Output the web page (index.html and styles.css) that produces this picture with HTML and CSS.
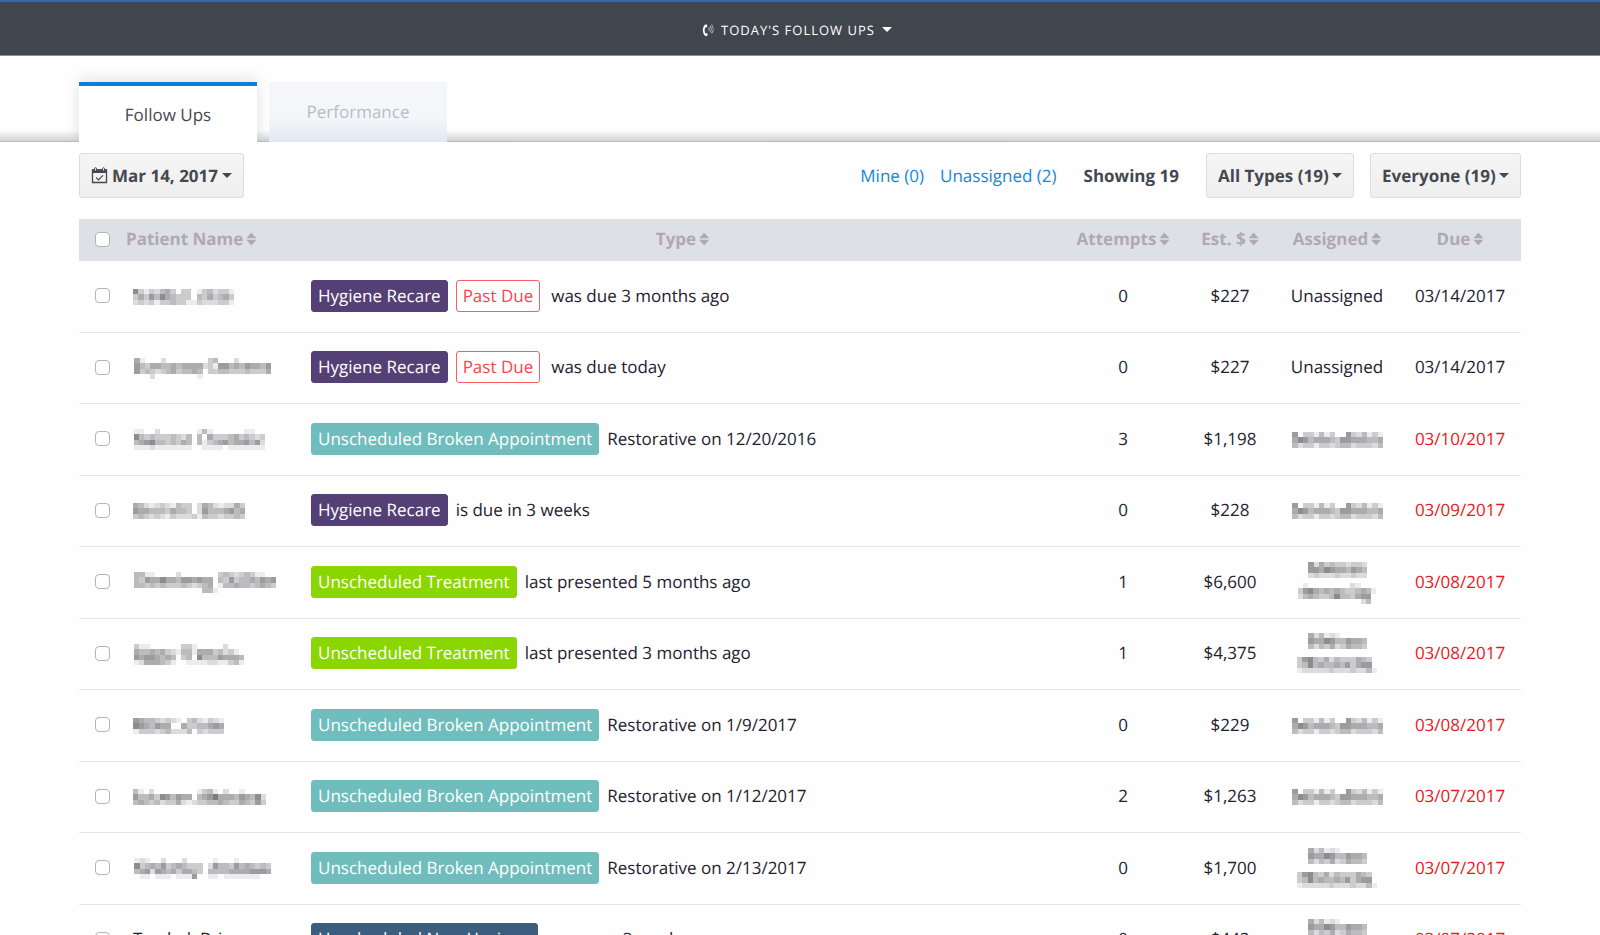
FILE: index.html
```html
<!DOCTYPE html>
<html lang="en">
<head>
    <meta charset="UTF-8">
    <meta name="viewport" content="width=device-width, initial-scale=1.0">
    <title>Today's Follow Ups</title>
    <link rel="stylesheet" href="styles.css">
</head>
<body>
    <header class="topbar">
        <button class="topbar-menu" type="button">
            <svg class="phone-icon" viewBox="0 0 12 14" aria-hidden="true">
                <path d="M4.6 1.2 2.8 1.800C.2 4.600.2 9.600 2.900 12.800l2 .5 1-2.200-1.700-1-.9.3C2.500 8.700 2.500 6.500 3.100 4.600l1 .1 1.300-1.400z" fill="#fff"/>
                <path d="M6.500 4.400c.9.9.9 2.300 0 3.300M8 3c1.700 1.700 1.700 4.400 0 6.100M9.500 1.700c2.200 2.500 2.200 6.200 0 8.700" fill="none" stroke="#aeb2b6" stroke-width="1.100"/>
            </svg>
            <span>Today's Follow Ups</span>
            <span class="caret"></span>
        </button>
    </header>

    <nav class="tabs">
        <a class="tab active" href="#followups">Follow Ups</a>
        <a class="tab" href="#performance">Performance</a>
    </nav>

    <main class="content" id="followups">
        <div class="toolbar">
            <button class="btn" type="button">
                <svg class="calendar-icon" viewBox="0 0 17 17" aria-hidden="true">
                    <path d="M1.500 3h14v12.500h-14z" fill="none" stroke="#444850" stroke-width="1.300"/>
                    <path d="M1 2.500h15V6H1z" fill="#444850"/>
                    <path d="M3.500 4V1.700a1 1 0 0 1 2 0V4zM11.500 4V1.700a1 1 0 0 1 2 0V4z" fill="#f3f3f3" stroke="#444850"/>
                    <path d="m5.200 10.500 2.300 2.300 4.500-4.500" fill="none" stroke="#444850" stroke-width="1.200"/>
                </svg>
                <span>Mar 14, 2017</span>
                <span class="caret"></span>
            </button>
            <div class="filters">
                <a href="#mine">Mine (0)</a>
                <a href="#unassigned">Unassigned (2)</a>
                <strong class="showing">Showing 19</strong>
                <select class="btn select" aria-label="Type">
                    <option>All Types (19)</option>
                </select>
                <select class="btn select" aria-label="Assigned to">
                    <option>Everyone (19)</option>
                </select>
            </div>
        </div>

        <table class="followups">
            <thead>
                <tr>
                    <th class="col-check"><input type="checkbox" aria-label="Select all"></th>
                    <th class="col-name"><button class="sort" type="button">Patient Name</button></th>
                    <th class="col-type"><button class="sort" type="button">Type</button></th>
                    <th class="col-attempts"><button class="sort" type="button">Attempts</button></th>
                    <th class="col-est"><button class="sort" type="button">Est. $</button></th>
                    <th class="col-assigned"><button class="sort" type="button">Assigned</button></th>
                    <th class="col-due"><button class="sort" type="button">Due</button></th>
                </tr>
            </thead>
            <tbody>
                <tr>
                    <td><input type="checkbox" aria-label="Select row 1"></td>
                    <td class="name"><span class="masked" data-cells="7313245303301342331/3536475433304353453/2323133433113222331"></span></td>
                    <td class="type"><span class="badge hygiene">Hygiene Recare</span><span class="badge past-due">Past Due</span><span class="note wide">was due 3 months ago</span></td>
                    <td>0</td>
                    <td>$227</td>
                    <td>Unassigned</td>
                    <td class="due">03/14/2017</td>
                </tr>
                <tr>
                    <td><input type="checkbox" aria-label="Select row 2"></td>
                    <td class="name"><span class="masked" data-cells="51000200000000340002000000/64355445455552316645465546/63432345344540334433343335/00020000000010000000000000"></span></td>
                    <td class="type"><span class="badge hygiene">Hygiene Recare</span><span class="badge past-due">Past Due</span><span class="note wide">was due today</span></td>
                    <td>0</td>
                    <td>$227</td>
                    <td>Unassigned</td>
                    <td class="due">03/14/2017</td>
                </tr>
                <tr>
                    <td><input type="checkbox" aria-label="Select row 3"></td>
                    <td class="name"><span class="masked" data-cells="1100200000001410000001100/7434333432404053334534323/4567443435404134564556462/1112111111100111101111111"></span></td>
                    <td class="type"><span class="badge broken">Unscheduled Broken Appointment</span><span class="note">Restorative on 12/20/2016</span></td>
                    <td>3</td>
                    <td>$1,198</td>
                    <td><span class="masked" data-cells="60331413006324131/57645554366555445/42331332344233324"></span></td>
                    <td class="due late">03/10/2017</td>
                </tr>
                <tr>
                    <td><input type="checkbox" aria-label="Select row 4"></td>
                    <td class="name"><span class="masked" data-cells="542123214330254212253/655444354430264445645/343232132223143323343"></span></td>
                    <td class="type"><span class="badge hygiene">Hygiene Recare</span><span class="note">is due in 3 weeks</span></td>
                    <td>0</td>
                    <td>$228</td>
                    <td><span class="masked" data-cells="60331413006324131/57645554366555445/42331332344233324"></span></td>
                    <td class="due late">03/09/2017</td>
                </tr>
                <tr>
                    <td><input type="checkbox" aria-label="Select row 5"></td>
                    <td class="name"><span class="masked" data-cells="441100002000000034323431100/436557554665655043634454656/443434333432345014454434543/000000000000044100000000000"></span></td>
                    <td class="type"><span class="badge treatment">Unscheduled Treatment</span><span class="note">last presented 5 months ago</span></td>
                    <td>1</td>
                    <td>$6,600</td>
                    <td>
                        <span class="masked line" data-cells="62534332332/66576554654/23222322322"></span>
                        <span class="masked line" data-cells="010000000021000/367545454334541/245433474435660/000000000000240"></span>
                    </td>
                    <td class="due late">03/08/2017</td>
                </tr>
                <tr>
                    <td><input type="checkbox" aria-label="Select row 6"></td>
                    <td class="name"><span class="masked" data-cells="311000000331000002000/544545321441555342310/656654540340744465554/125554310011112211341"></span></td>
                    <td class="type"><span class="badge treatment">Unscheduled Treatment</span><span class="note">last presented 3 months ago</span></td>
                    <td>1</td>
                    <td>$4,375</td>
                    <td>
                        <span class="masked line" data-cells="52412100000/65576446554/42435235443"></span>
                        <span class="masked line" data-cells="367435243335430/347454454635660/122222322232241"></span>
                    </td>
                    <td class="due late">03/08/2017</td>
                </tr>
                <tr>
                    <td><input type="checkbox" aria-label="Select row 7"></td>
                    <td class="name"><span class="masked" data-cells="65443232103421321/76546550053344565/13332342224032333"></span></td>
                    <td class="type"><span class="badge broken">Unscheduled Broken Appointment</span><span class="note">Restorative on 1/9/2017</span></td>
                    <td>0</td>
                    <td>$229</td>
                    <td><span class="masked" data-cells="60331413006324131/57645554366555445/42331332344233324"></span></td>
                    <td class="due late">03/08/2017</td>
                </tr>
                <tr>
                    <td><input type="checkbox" aria-label="Select row 8"></td>
                    <td class="name"><span class="masked" data-cells="4102000000001341020010000/6445376465504568555465472/4543423352123344543354363"></span></td>
                    <td class="type"><span class="badge broken">Unscheduled Broken Appointment</span><span class="note">Restorative on 1/12/2017</span></td>
                    <td>2</td>
                    <td>$1,263</td>
                    <td><span class="masked" data-cells="60331413006324131/57645554366555445/42331332344233324"></span></td>
                    <td class="due late">03/07/2017</td>
                </tr>
                <tr>
                    <td><input type="checkbox" aria-label="Select row 9"></td>
                    <td class="name"><span class="masked" data-cells="12100200020000010001000000/73454634543330264436454343/45626545355430444455556665/01101110111600110111111100"></span></td>
                    <td class="type"><span class="badge broken">Unscheduled Broken Appointment</span><span class="note">Restorative on 2/13/2017</span></td>
                    <td>0</td>
                    <td>$1,700</td>
                    <td>
                        <span class="masked line" data-cells="52412100000/65576446554/42435235443"></span>
                        <span class="masked line" data-cells="367435243335430/347454454635660/122222322232241"></span>
                    </td>
                    <td class="due late">03/07/2017</td>
                </tr>
                <tr>
                    <td><input type="checkbox" aria-label="Select row 10"></td>
                    <td class="name">Trachel, Bria</td>
                    <td class="type"><span class="badge new-hygiene">Unscheduled New Hygiene</span><span class="note">was seen 3 weeks ago</span></td>
                    <td>0</td>
                    <td>$442</td>
                    <td>
                        <span class="masked line" data-cells="52412100000/65576446554/42435235443"></span>
                        <span class="masked line" data-cells="367435243335430/347454454635660/122222322232241"></span>
                    </td>
                    <td class="due late">03/07/2017</td>
                </tr>
            </tbody>
        </table>
    </main>

    <script src="script.js"></script>
</body>
</html>
```

FILE: styles.css
```css
* {
    box-sizing: border-box;
}

html {
    height: 100%;
    overflow: hidden;
}

body {
    height: 100%;
    margin: 0;
    overflow: hidden;
    background-color: #fefefe;
    color: #1f2130;
    font-family: 'Open Sans', sans-serif;
    font-size: 17px;
    line-height: 24px;
    text-rendering: geometricPrecision;
}

button,
select {
    font-family: inherit;
    font-size: inherit;
    line-height: inherit;
    text-rendering: inherit;
    cursor: pointer;
}

a {
    color: #1287e0;
    text-decoration: none;
}

/* Top bar */
.topbar {
    display: flex;
    justify-content: center;
    align-items: center;
    height: 56px;
    padding: 2px 6px 0 0;
    border-top: 2px solid #2a6cb5;
    border-bottom: 1px solid #8d9195;
    background-color: #3f464d;
}

.topbar-menu {
    display: flex;
    align-items: center;
    gap: 7px;
    padding: 0;
    border: none;
    background: none;
    color: #fff;
    font-size: 13px;
    letter-spacing: 1px;
    text-transform: uppercase;
}

.phone-icon {
    width: 12px;
    height: 14px;
}

.caret {
    border-top: 5px solid currentColor;
    border-left: 5px solid transparent;
    border-right: 5px solid transparent;
}

/* Tabs */
.tabs {
    display: flex;
    gap: 12px;
    padding: 26px 79px 0;
    overflow: hidden;
    background: linear-gradient(to top, #b9bbbf 1px, #d2d3d4 1px, rgba(255, 255, 255, 0) 12px);
}

.tab {
    width: 178px;
    height: 60px;
    padding-top: 18px;
    background: linear-gradient(#f5f6f9 60%, #dfe9f4);
    color: #b9bdc3;
    text-align: center;
}

.tab.active {
    padding-top: 17px;
    border-top: 4px solid #0a80dc;
    background: #fff;
    box-shadow: 0 -2px 14px rgba(0, 0, 0, 0.12);
    color: #444850;
}

/* Toolbar */
.content {
    padding: 0 79px;
}

.toolbar {
    display: flex;
    justify-content: space-between;
    align-items: center;
    padding: 11px 0 21px;
}

.filters {
    display: flex;
    align-items: center;
    gap: 16px;
}

.showing {
    margin: 0 11px;
    color: #444850;
}

.btn {
    display: flex;
    align-items: center;
    gap: 4px;
    height: 45px;
    padding: 0 11px;
    border: 1px solid #dcdcdc;
    border-radius: 3px;
    background: linear-gradient(#f5f5f5, #efefef);
    color: #444850;
    font-weight: bold;
}

.calendar-icon {
    width: 17px;
    height: 17px;
}

.select {
    appearance: none;
    padding: 0 24px 0 11px;
    background: url("data:image/svg+xml,%3Csvg xmlns='http://www.w3.org/2000/svg' width='10' height='5'%3E%3Cpath d='M0 0h10L5 5z' fill='%23444850'/%3E%3C/svg%3E") no-repeat right 11px center, linear-gradient(#f5f5f5, #efefef);
}

/* Follow ups table */
.followups {
    width: 100%;
    border-collapse: separate;
    border-spacing: 0;
    table-layout: fixed;
}

th {
    height: 42px;
    padding: 0 0 2px;
    background-color: #dde1e6;
}

.col-check {
    width: 47px;
}

.col-name {
    width: 178px;
    text-align: left;
}

.col-attempts {
    width: 124px;
}

.col-est {
    width: 90px;
}

.col-assigned {
    width: 124px;
}

.col-due {
    width: 122px;
}

.sort {
    display: inline-flex;
    align-items: center;
    gap: 3px;
    padding: 0;
    border: none;
    background: none;
    color: #b2a8b0;
    font-weight: bold;
}

.sort::after {
    content: "";
    width: 10px;
    height: 13px;
    background-color: currentColor;
    clip-path: polygon(50% 0, 100% 44%, 0 44%, 0 56%, 100% 56%, 50% 100%, 0 56%, 0 44%);
}

td {
    height: 72px;
    padding: 0 0 2px;
    border-bottom: 1px solid #e3e5ea;
    text-align: center;
}

tr:nth-child(even) td {
    height: 71px;
}

td.name {
    padding-left: 7px;
    text-align: left;
}

td.type {
    padding-left: 7px;
    text-align: left;
    white-space: nowrap;
}

.due.late {
    color: #ea1821;
}

input[type="checkbox"] {
    appearance: none;
    display: block;
    width: 15px;
    height: 15px;
    margin: 0 auto;
    border: 1px solid #b4b4b8;
    border-radius: 4px;
    background-color: #fff;
}

input[type="checkbox"]:checked {
    background-color: #0a80dc;
}

/* Badges */
.badge {
    display: inline-block;
    margin-right: 8px;
    padding: 3px 6px;
    border: 1px solid transparent;
    border-radius: 3px;
    color: #fff;
}

.badge.hygiene {
    border-color: #544074;
    background-color: #544074;
}

.badge.broken {
    border-color: #6fbdbd;
    background-color: #6fbdbd;
}

.badge.treatment {
    border-color: #8bd600;
    background-color: #8bd600;
}

.badge.new-hygiene {
    border-color: #3b5e7e;
    background-color: #3b5e7e;
}

.badge.past-due {
    border-color: #fb5c64;
    background-color: #fff;
    color: #f8454f;
}

.note.wide {
    margin-left: 3px;
}

/* Masked names */
.masked {
    display: inline-block;
    vertical-align: middle;
}

.masked.line {
    display: flex;
    justify-content: center;
    align-items: center;
    height: 24px;
}

.masked svg {
    display: block;
}
```

FILE: script.js
```javascript
// Draw masked names as a grey mosaic, one digit per cell (0 = empty, 9 = darkest)
const CELL = 16 / 3;

document.querySelectorAll('.masked').forEach((el) => {
    const rows = el.dataset.cells.split('/');
    const cols = rows[0].length;
    let cells = '';

    rows.forEach((row, y) => {
        [...row].forEach((level, x) => {
            if (level !== '0') {
                const grey = 252 - level * 16;
                cells += `<rect x="${x}" y="${y}" width="1" height="1" fill="rgb(${grey}, ${grey}, ${grey + 3})"/>`;
            }
        });
    });

    const width = Math.round(cols * CELL);
    const height = Math.round(rows.length * CELL);
    el.innerHTML = `<svg width="${width}" height="${height}" viewBox="0 0 ${cols} ${rows.length}" shape-rendering="crispEdges" aria-hidden="true">${cells}</svg>`;
});
```
